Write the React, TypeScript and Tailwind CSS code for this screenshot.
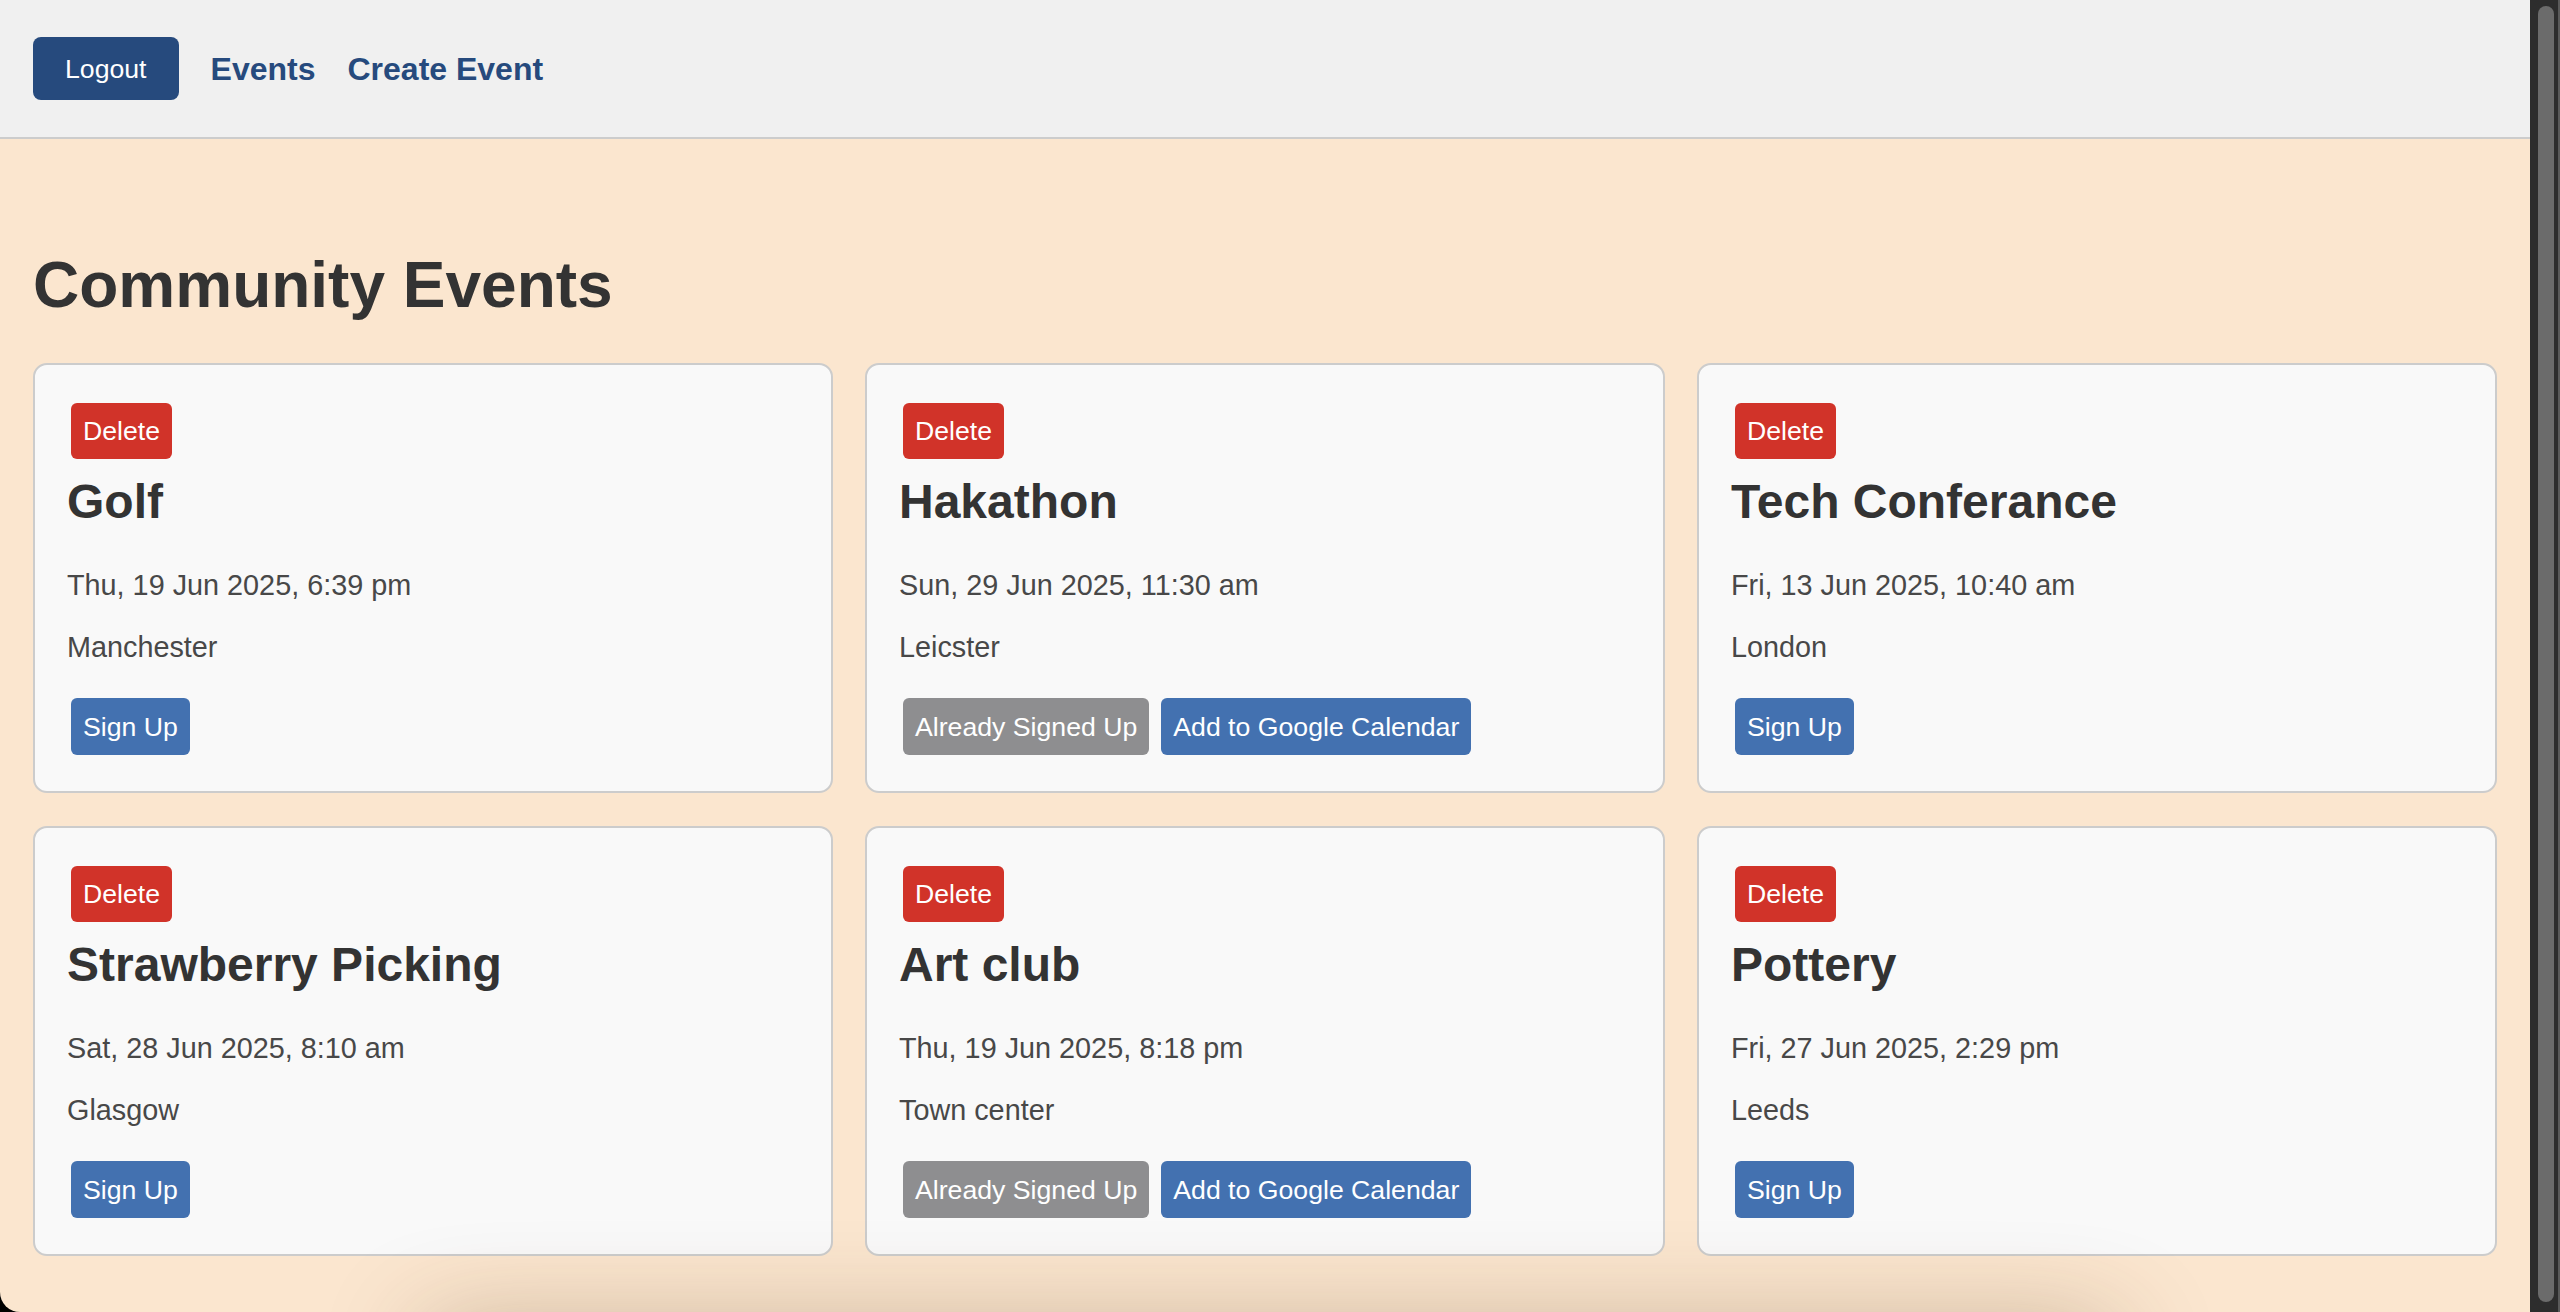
import React from "react";

type Ev = { title: string; date: string; loc: string; signed: boolean };

const events: Ev[] = [
  { title: "Golf", date: "Thu, 19 Jun 2025, 6:39 pm", loc: "Manchester", signed: false },
  { title: "Hakathon", date: "Sun, 29 Jun 2025, 11:30 am", loc: "Leicster", signed: true },
  { title: "Tech Conferance", date: "Fri, 13 Jun 2025, 10:40 am", loc: "London", signed: false },
  { title: "Strawberry Picking", date: "Sat, 28 Jun 2025, 8:10 am", loc: "Glasgow", signed: false },
  { title: "Art club", date: "Thu, 19 Jun 2025, 8:18 pm", loc: "Town center", signed: true },
  { title: "Pottery", date: "Fri, 27 Jun 2025, 2:29 pm", loc: "Leeds", signed: false },
];

function Card({ ev }: { ev: Ev }) {
  return (
    <div className="flex flex-col items-start rounded-[14px] border-2 border-[#cccccc] bg-[#f9f9f9] p-[32px]">
      <button className="mt-[6px] ml-[4px] flex h-[56px] items-center rounded-[6px] bg-[#d13329] px-[12px] text-[26.67px] text-white">
        Delete
      </button>
      <h2 className="mt-[15px] text-[48px] font-bold leading-[55px] text-[#333333]">{ev.title}</h2>
      <p className="mt-[40px] text-[28.8px] leading-[32px] text-[#484848]">{ev.date}</p>
      <p className="mt-[30px] text-[28.8px] leading-[32px] text-[#484848]">{ev.loc}</p>
      <div className="mt-[35px] mb-[4px] ml-[4px] flex gap-[12px]">
        {ev.signed ? (
          <>
            <button className="flex h-[57px] items-center rounded-[6px] bg-[#8e8e90] px-[12px] text-[26.67px] text-white">
              Already Signed Up
            </button>
            <button className="flex h-[57px] items-center rounded-[6px] bg-[#4371b0] px-[12px] text-[26.67px] text-white">
              Add to Google Calendar
            </button>
          </>
        ) : (
          <button className="flex h-[57px] items-center rounded-[6px] bg-[#4371b0] px-[12px] text-[26.67px] text-white">
            Sign Up
          </button>
        )}
      </div>
    </div>
  );
}

export default function App() {
  return (
    <div
      className="relative flex h-[1312px] w-full overflow-hidden bg-black"
      style={{ fontFamily: '"Liberation Sans", Arial, Helvetica, sans-serif' }}
    >
      <div className="relative flex flex-1 flex-col overflow-hidden rounded-bl-[20px] bg-[#fbe6cf]">
        <nav className="flex h-[139px] shrink-0 items-center border-b-2 border-[#cccccc] bg-[#f0f0f0] pl-[33px]">
          <button className="flex h-[63px] items-center rounded-[8px] bg-[#264a7d] px-[32px] text-[26.67px] text-white">
            Logout
          </button>
          <a className="ml-[32px] text-[32px] font-bold text-[#264a7d]">Events</a>
          <a className="ml-[32px] text-[32px] font-bold text-[#264a7d]">Create Event</a>
        </nav>
        <main className="px-[33px] pt-[109px]">
          <h1 className="mb-[41px] text-[64px] font-bold leading-[74px] text-[#333333]">Community Events</h1>
          <div className="grid grid-cols-3 gap-x-[32px] gap-y-[33px]">
            {events.map((ev) => (
              <Card key={ev.title} ev={ev} />
            ))}
          </div>
        </main>
        <div className="pointer-events-none absolute bottom-[-70px] left-[420px] h-[50px] w-[1700px] rounded-full shadow-[0_0_100px_rgba(80,50,20,0.42)]" />
      </div>
      <div className="flex w-[30px] shrink-0 bg-[#2d2d2d] pl-[8px]">
        <div className="mt-[6px] mb-[10px] w-[16px] rounded-full bg-[#6b6b6b]" />
        <div className="ml-[4px] w-[2px] bg-[#5a5a5a]" />
      </div>
    </div>
  );
}
